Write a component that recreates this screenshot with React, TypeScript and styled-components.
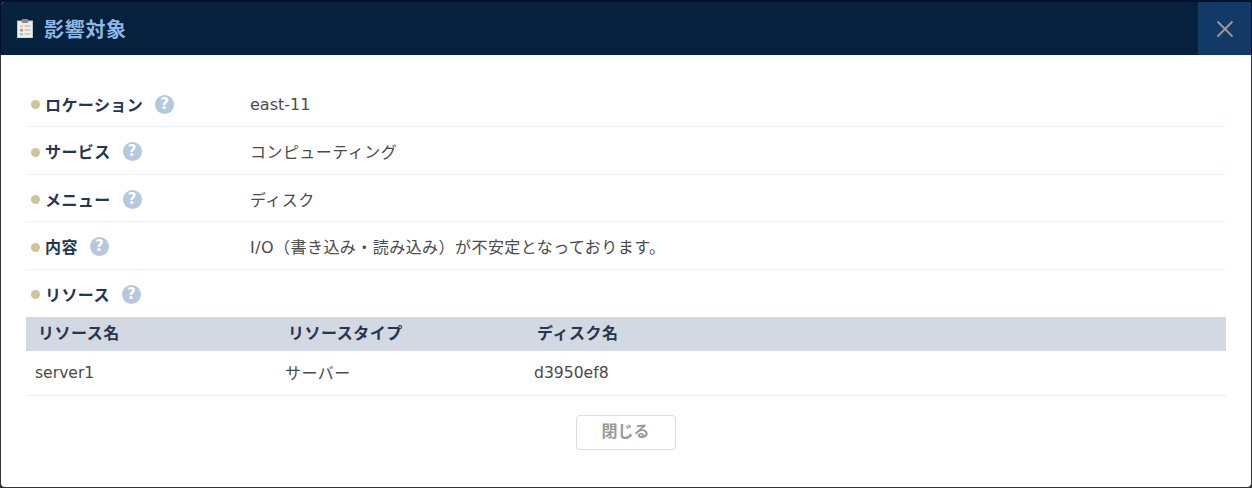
import styled, { createGlobalStyle } from 'styled-components';

const GlobalStyle = createGlobalStyle`
	html, body {
		margin: 0;
		padding: 0;
		height: 100%;
		background: #02122a;
		overflow: hidden;
	}
	body {
		font-family: 'Noto Sans CJK JP', 'Noto Sans', sans-serif;
		color: #333;
	}
`;

const Backdrop = styled.div`
	width: 1252px;
	height: 488px;
	box-sizing: border-box;
	padding: 2px 1px 1px 1px;
	background: linear-gradient(#02122a 0, #02122a 55px, #333 55px);
`;

const Modal = styled.div`
	height: 485px;
	background: #fff;
	border-radius: 4px;
	overflow: hidden;
	display: flex;
	flex-direction: column;
`;

const Header = styled.header`
	height: 53px;
	flex: none;
	display: flex;
	align-items: center;
	background: #06213d;
`;

const Title = styled.h1`
	flex: 1;
	margin: 0;
	display: flex;
	align-items: center;
	gap: 11px;
	padding-left: 16px;
	font-size: 20px;
	font-weight: 700;
	letter-spacing: 0.7px;
	color: #8fb8e6;
`;

const CloseButton = styled.button`
	width: 53px;
	height: 53px;
	border: 0;
	padding: 0;
	display: flex;
	align-items: center;
	justify-content: center;
	background: #133a66;
`;

const Body = styled.div`
	flex: 1;
	padding: 24.5px 26px 0 25px;
	display: flex;
	flex-direction: column;
`;

const Row = styled.div<{ $plain?: boolean }>`
	height: 47.5px;
	box-sizing: border-box;
	padding-top: 2px;
	display: flex;
	align-items: center;
	border-bottom: 1px solid ${(props) => (props.$plain ? 'transparent' : '#e9eff4')};
`;

const Label = styled.div`
	width: 224px;
	flex: none;
	padding-left: 5px;
	box-sizing: border-box;
	display: flex;
	align-items: center;
	font-size: 16px;
	font-weight: 700;
	letter-spacing: 0.4px;
	color: #26364f;
`;

const Dot = styled.span`
	width: 9px;
	height: 9px;
	margin: 2px 5px 0 0;
	border-radius: 50%;
	background: #cdc59b;
`;

const Help = styled.span`
	width: 19px;
	height: 19px;
	margin: 1px 0 0 12px;
	border-radius: 50%;
	background: #b5c8de;
	color: #fff;
	font-family: 'DejaVu Sans', sans-serif;
	font-size: 15px;
	font-weight: 700;
	line-height: 19px;
	text-align: center;
	letter-spacing: 0;
`;

const Value = styled.div<{ $latin?: boolean }>`
	font-family: 'DejaVu Sans', 'Noto Sans CJK JP', sans-serif;
	font-size: 16px;
	letter-spacing: ${(props) => (props.$latin ? '0' : '0.45px')};
	padding-top: ${(props) => (props.$latin ? '2px' : '0')};
	color: #4a4a4a;
`;

const Table = styled.table`
	border-collapse: collapse;
	table-layout: fixed;
	width: 1200px;
	flex: none;
`;

const HeadCell = styled.th<{ $width?: number }>`
	width: ${(props) => (props.$width ? `${props.$width}px` : 'auto')};
	height: 34px;
	box-sizing: border-box;
	padding: 0 0 5px 12px;
	background: #d2d9e2;
	text-align: left;
	font-size: 16px;
	font-weight: 700;
	letter-spacing: 0.5px;
	color: #26364f;
`;

const Cell = styled.td<{ $latin?: boolean }>`
	height: 44px;
	padding: ${(props) => (props.$latin ? '0 0 0 9px' : '0 0 2px 9px')};
	box-sizing: border-box;
	border-bottom: 1px solid #e9eff4;
	font-family: 'DejaVu Sans', 'Noto Sans CJK JP', sans-serif;
	font-size: ${(props) => (props.$latin ? '15.6px' : '16px')};
	letter-spacing: ${(props) => (props.$latin ? '0' : '0.5px')};
	color: #4a4a4a;
`;

const Footer = styled.div`
	display: flex;
	justify-content: center;
	padding-top: 19px;
`;

const Button = styled.button`
	width: 100px;
	height: 35px;
	border: 1px solid #dcdcdc;
	border-radius: 4px;
	background: #fff;
	font-family: inherit;
	font-size: 16px;
	font-weight: 700;
	color: #999;
	padding: 0 0 4px;
`;

const ClipboardIcon = () => (
	<svg width='16' height='19' viewBox='0 0 16 19'>
		<rect x='0.5' y='2' width='15' height='17' fill='#eeeeea' stroke='#c4c4c0' />
		<rect x='5' y='0' width='6' height='4' fill='#8a8a8a' />
		<rect x='3' y='6' width='3' height='2.5' fill='#ecd27e' />
		<rect x='7.5' y='6' width='6' height='2' fill='#cfcfcf' />
		<rect x='3' y='10' width='3' height='2.5' fill='#d98490' />
		<rect x='7.5' y='10' width='6' height='2' fill='#cfcfcf' />
		<rect x='3' y='14' width='3' height='2.5' fill='#8fcabd' />
		<rect x='7.5' y='14' width='6' height='2' fill='#cfcfcf' />
	</svg>
);

const CloseIcon = () => (
	<svg width='18' height='18' viewBox='0 0 18 18'>
		<path d='M1.5 1.5 L16.5 16.5 M16.5 1.5 L1.5 16.5' stroke='#9a9a9a' strokeWidth='1.8' fill='none' />
	</svg>
);

const rows = [
	{ label: 'ロケーション', value: 'east-11', latin: true },
	{ label: 'サービス', value: 'コンピューティング' },
	{ label: 'メニュー', value: 'ディスク' },
	{ label: '内容', value: 'I/O（書き込み・読み込み）が不安定となっております。' },
];

const App = () => {
	return (
		<>
			<GlobalStyle />
			<Backdrop>
				<Modal>
					<Header>
						<Title>
							<ClipboardIcon />
							影響対象
						</Title>
						<CloseButton aria-label='閉じる'>
							<CloseIcon />
						</CloseButton>
					</Header>
					<Body>
						{rows.map((row) => (
							<Row key={row.label}>
								<Label>
									<Dot />
									{row.label}
									<Help>?</Help>
								</Label>
								<Value $latin={row.latin}>{row.value}</Value>
							</Row>
						))}
						<Row $plain>
							<Label>
								<Dot />
								リソース
								<Help>?</Help>
							</Label>
						</Row>
						<Table>
							<thead>
								<tr>
									<HeadCell $width={250}>リソース名</HeadCell>
									<HeadCell $width={249}>リソースタイプ</HeadCell>
									<HeadCell>ディスク名</HeadCell>
								</tr>
							</thead>
							<tbody>
								<tr>
									<Cell $latin>server1</Cell>
									<Cell>サーバー</Cell>
									<Cell $latin>d3950ef8</Cell>
								</tr>
							</tbody>
						</Table>
						<Footer>
							<Button>閉じる</Button>
						</Footer>
					</Body>
				</Modal>
			</Backdrop>
		</>
	);
};

export default App;
